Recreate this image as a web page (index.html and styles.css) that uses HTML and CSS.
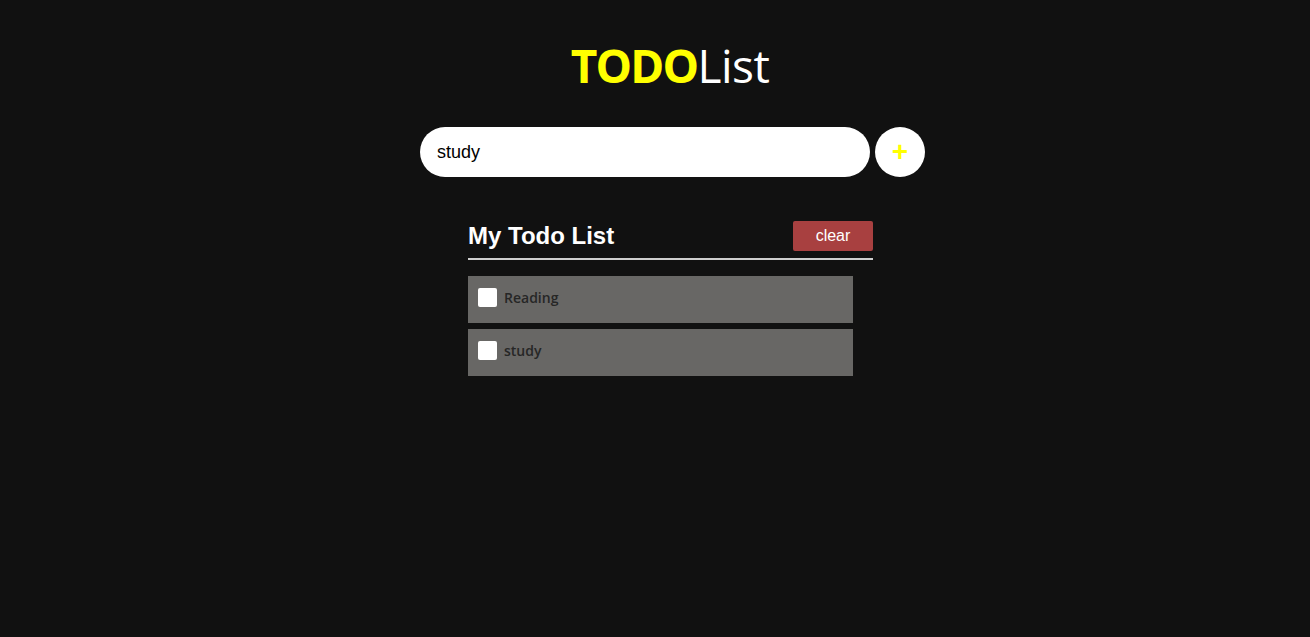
FILE: index.html
```html
<!DOCTYPE html>
<html lang="en">
<head>
<meta charset="utf-8">
<title>TODOList</title>
<link rel="stylesheet" href="styles.css">
</head>
<body>
<div class="app">
  <h1 class="title"><span class="title-bold">TODO</span>List</h1>
  <div class="add-row">
    <input class="add-input" type="text" value="study">
    <button class="add-btn" type="button">+</button>
  </div>
  <div class="panel">
    <div class="panel-head">
      <h2 class="panel-title">My Todo List</h2>
      <button class="clear-btn" type="button">clear</button>
    </div>
    <ul class="todo-list">
      <li class="todo-item"><span class="check"></span><span class="todo-text">Reading</span></li>
      <li class="todo-item"><span class="check"></span><span class="todo-text">study</span></li>
    </ul>
  </div>
</div>
</body>
</html>
```
FILE: styles.css
```css
html, body {
  margin: 0;
  padding: 0;
  background: #111111;
  height: 100%;
}
body {
  font-family: "Liberation Sans", Arial, sans-serif;
}
.app {
  width: 505px;
  margin-left: calc(50% - 235px);
  padding-top: 34px;
}
.title {
  margin: 0;
  padding-right: 5px;
  text-align: center;
  font-family: "Open Sans", "Noto Sans", sans-serif;
  font-weight: 400;
  font-size: 46px;
  line-height: 62px;
  color: #ffffff;
  letter-spacing: -0.5px;
}
.title-bold {
  color: #ffff00;
  font-weight: 700;
  letter-spacing: -1.8px;
}
.add-row {
  display: flex;
  gap: 5px;
  margin-top: 31px;
}
.add-input {
  width: 450px;
  height: 50px;
  box-sizing: border-box;
  border: none;
  border-radius: 25px;
  padding: 0 17px;
  font-family: "Liberation Sans", Arial, sans-serif;
  font-size: 18px;
  color: #000;
  background: #fff;
  outline: none;
}
.add-btn {
  width: 50px;
  height: 50px;
  border: none;
  border-radius: 50%;
  background: #fff;
  color: #ffff00;
  font-family: "Liberation Sans", Arial, sans-serif;
  font-weight: 700;
  font-size: 28px;
  line-height: 50px;
  padding: 0;
}
.panel {
  width: 405px;
  margin: 44px 0 0 48px;
}
.panel-head {
  display: flex;
  justify-content: space-between;
  align-items: center;
  border-bottom: 2px solid #cfcfcf;
  padding-bottom: 7px;
}
.panel-title {
  margin: 0;
  font-size: 24px;
  font-weight: 700;
  color: #fff;
  line-height: 30px;
}
.clear-btn {
  width: 80px;
  height: 30px;
  border: none;
  border-radius: 2px;
  background: #a84040;
  color: #fff;
  font-family: "Liberation Sans", Arial, sans-serif;
  font-size: 16px;
  padding: 0;
}
.todo-list {
  list-style: none;
  margin: 16px 0 0 0;
  padding: 0;
}
.todo-item {
  width: 385px;
  height: 47px;
  background: #686765;
  margin-bottom: 6px;
  display: flex;
  align-items: center;
  padding: 0 0 4px 10px;
  box-sizing: border-box;
  gap: 7px;
}
.check {
  width: 19px;
  height: 19px;
  background: #fff;
  border-radius: 2px;
  margin-top: -1px;
}
.todo-text {
  font-family: "Open Sans", "Noto Sans", sans-serif;
  font-weight: 600;
  font-size: 14px;
  color: #262626;
}
```
